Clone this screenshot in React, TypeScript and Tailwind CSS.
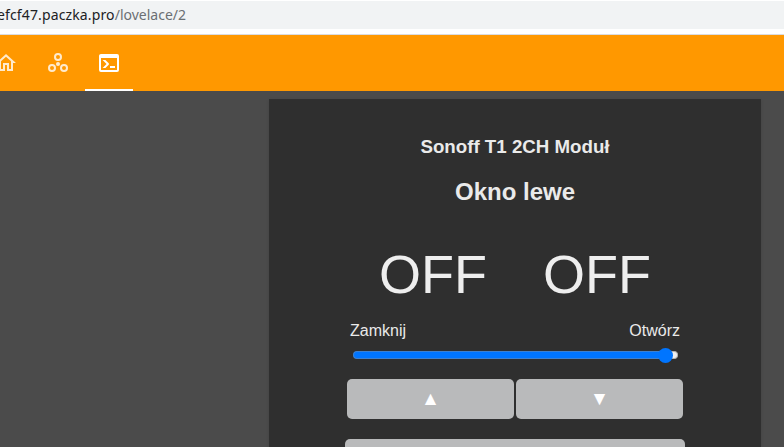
import React from 'react';

function AddressBar() {
  return (
    <div className="h-[35px] border-b border-[#dadce0] bg-white pt-px">
      <div className="flex h-7 bg-[#f1f3f4]">
        <div className="flex w-[186px] items-center justify-end overflow-hidden whitespace-nowrap font-['Noto_Sans',sans-serif] text-[14px] leading-7 text-[#202124]">
          <span className="tracking-[0.13px]">efcf47.paczka.pro</span>
          <span className="text-[#6b6f73]">/lovelace/2</span>
        </div>
      </div>
    </div>
  );
}

function Tab({ active, children }: { active?: boolean; children: React.ReactNode }) {
  return (
    <div
      className={
        active
          ? 'flex h-14 w-12 shrink-0 items-center justify-center border-b-2 border-white pt-0.5 text-white'
          : 'flex h-14 w-12 shrink-0 items-center justify-center border-b-2 border-transparent pt-0.5 text-white/80'
      }
    >
      <svg viewBox="0 0 24 24" className="h-6 w-6" fill="currentColor">
        {children}
      </svg>
    </div>
  );
}

function Tabs() {
  return (
    <div className="flex h-14 gap-[3px] overflow-hidden bg-[#ff9800]">
      <div className="-ml-[18px] flex">
        <Tab>
          <path d="M12 5.69L17 10.19V18H15V12H9V18H7V10.19L12 5.69M12 3L2 12H5V20H11V14H13V20H19V12H22" />
        </Tab>
      </div>
      <div className="ml-px">
        <Tab>
          <g fill="none" stroke="currentColor" strokeWidth="2">
            <circle cx="12" cy="6" r="3" />
            <circle cx="6" cy="17" r="3" />
            <circle cx="18" cy="17" r="3" />
          </g>
          <circle cx="12" cy="13" r="2" />
        </Tab>
      </div>
      <Tab active>
        <path d="M20,19V7H4V19H20M20,3A2,2 0 0,1 22,5V19A2,2 0 0,1 20,21H4A2,2 0 0,1 2,19V5C2,3.89 2.9,3 4,3H20M13,17V15H18V17H13M9.58,13L5.57,9H8.4L11.7,12.3C12.09,12.69 12.09,13.33 11.7,13.72L8.42,17H5.59L9.58,13Z" />
      </Tab>
    </div>
  );
}

function Slider() {
  return (
    <div className="mx-auto mt-[7px] flex h-4 w-[325px] items-center">
      <div className="h-2 w-[307px] rounded-l-[4px] border-y border-l border-[#3d80d0] bg-[#0075ff]" />
      <div className="z-10 -mx-[2px] h-[15px] w-[15px] shrink-0 rounded-full bg-[#0075ff]" />
      <div className="h-2 flex-1 rounded-r-[4px] border-y border-r border-[#b2b2b2] bg-[#efefef]" />
    </div>
  );
}

function Panel() {
  return (
    <main className="ml-[269px] mt-2 h-[348px] w-[492px] bg-[#2f2f2f] pt-[37px] shadow-[0_1px_3px_rgba(0,0,0,0.12)]">
      <div className="mx-auto w-[340px] text-[#eaeaea]">
        <h3 className="text-center text-[18.72px] font-bold leading-[22px]">Sonoff T1 2CH Moduł</h3>
        <h2 className="mt-5 text-center text-[24px] font-bold leading-7">Okno lewe</h2>
        <div className="mx-auto mt-[37px] flex w-[328px] text-center text-[54px] leading-[62px] text-[#eeeeee]">
          <div className="w-1/2">OFF</div>
          <div className="w-1/2">OFF</div>
        </div>
        <div className="mx-[5px] mt-[17px] flex justify-between text-[16px] leading-[18px]">
          <span>Zamknij</span>
          <span>Otwórz</span>
        </div>
        <Slider />
        <div className="mx-0.5 mt-4 flex gap-0.5 text-[19.2px] leading-10 text-white">
          <button className="h-10 flex-1 rounded-[5px] bg-[#b9babb]">▲</button>
          <button className="h-10 flex-1 rounded-[5px] bg-[#b9babb]">▼</button>
        </div>
        <button className="mt-5 block h-10 w-full rounded-[5px] bg-[#b9babb]" />
      </div>
    </main>
  );
}

export default function App() {
  return (
    <div className="flex h-[447px] w-[784px] flex-col overflow-hidden bg-[#4b4b4b] font-['Liberation_Sans',Arial,sans-serif]">
      <AddressBar />
      <Tabs />
      <div className="flex overflow-hidden">
        <Panel />
      </div>
    </div>
  );
}
